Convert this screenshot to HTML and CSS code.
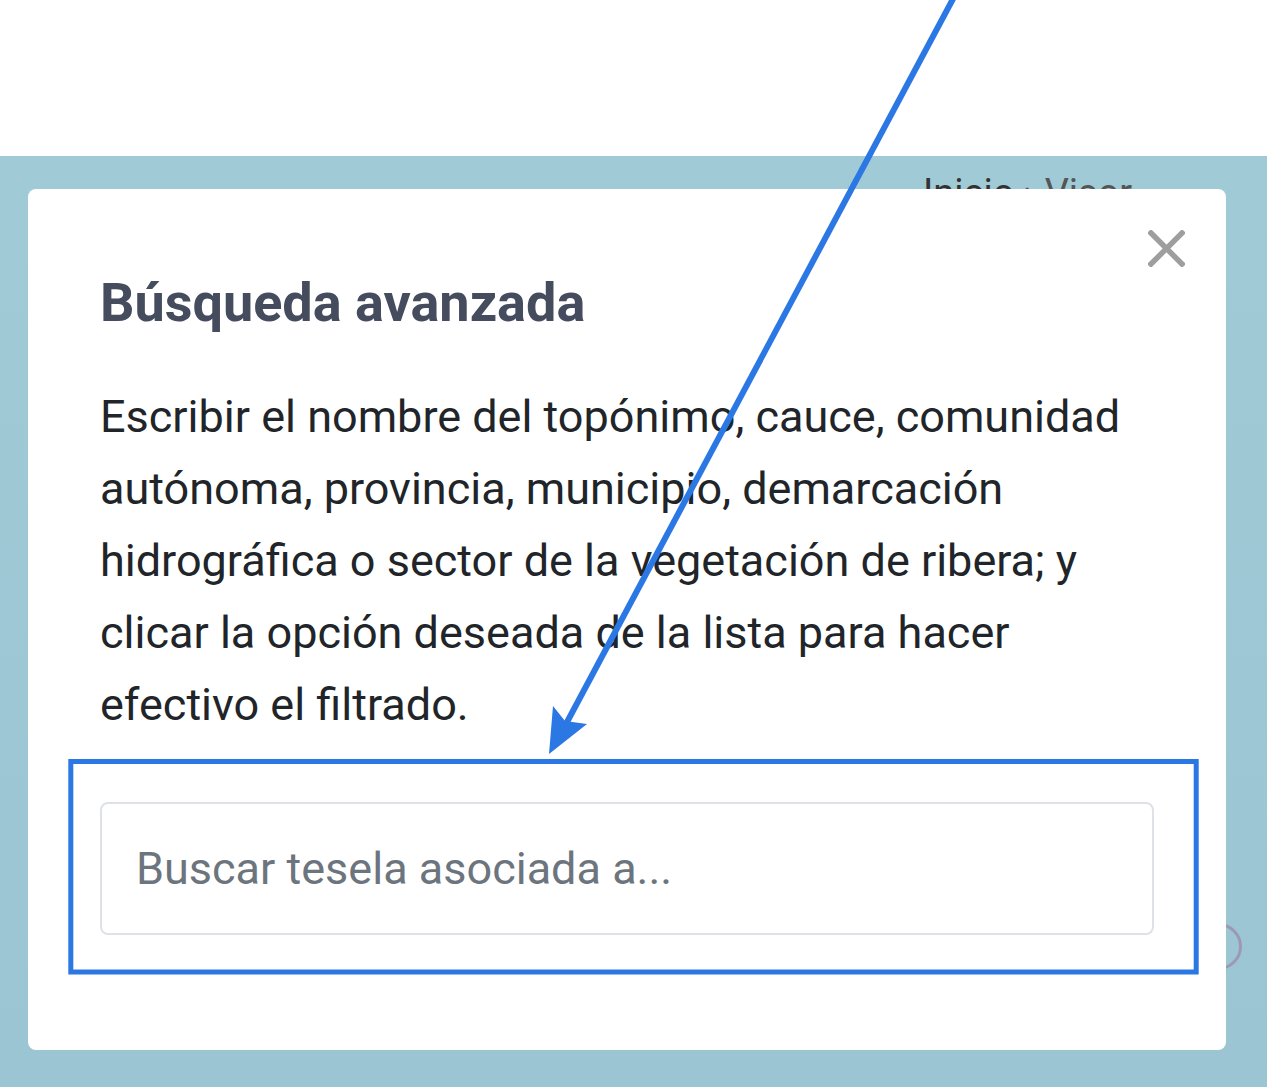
FILE: index.html
```html
<!DOCTYPE html>
<html lang="es">
<head>
  <meta charset="UTF-8" />
  <meta name="viewport" content="width=device-width, initial-scale=1.0"/>
  <title>Búsqueda avanzada</title>
  <link rel="stylesheet" href="styles.css">
</head>
<body>
  <header class="topbar"></header>

  <main class="backdrop">
    <div class="breadcrumb"><span class="crumb-home">Inicio</span> › Visor</div>
    <span class="ring"></span>

    <div class="modal">
      <button class="close-btn" aria-label="Cerrar">
        <svg width="37" height="37" viewBox="0 0 37 37">
          <path d="M3 3 L34 34 M34 3 L3 34" stroke="#9e9e9e" stroke-width="5.5" stroke-linecap="square" fill="none"/>
        </svg>
      </button>
      <h2 class="modal-title">Búsqueda avanzada</h2>
      <p class="modal-text">Escribir el nombre del topónimo, cauce, comunidad autónoma, provincia, municipio, demarcación hidrográfica o sector de la vegetación de ribera; y clicar la opción deseada de la lista para hacer efectivo el filtrado.</p>
      <input class="search-input" type="text" placeholder="Buscar tesela asociada a...">
    </div>
  </main>

  <svg class="annotation" width="1267" height="1087" viewBox="0 0 1267 1087">
    <line x1="954" y1="-3" x2="566" y2="724" stroke="#2b78e4" stroke-width="6"/>
    <polygon points="549,754 553,706 565,721 587,724" fill="#2b78e4"/>
    <rect x="70.8" y="761.5" width="1125.4" height="210.5" fill="none" stroke="#2b78e4" stroke-width="5"/>
  </svg>
</body>
</html>
```

FILE: styles.css
```css
body {
  font-family: Roboto, "Liberation Sans", sans-serif;
  background: #fff;
  margin: 0;
  padding: 0;
  position: relative;
  width: 1267px;
  height: 1087px;
  overflow: hidden;
}

.topbar {
  height: 156px;
  background: #fff;
}

.backdrop {
  position: relative;
  height: 931px;
  background: linear-gradient(180deg, #9fcad6 0%, #9bc5d2 100%);
  padding: 33px 41px 0 28px;
  box-sizing: border-box;
}

.breadcrumb {
  position: absolute;
  top: 18px;
  left: 923px;
  font-size: 38px;
  line-height: 38px;
  color: #555;
  white-space: nowrap;
}

.crumb-home {
  color: #333;
}

.ring {
  position: absolute;
  left: 1195px;
  top: 767px;
  width: 41px;
  height: 41px;
  border: 3px solid #9c98b6;
  border-radius: 50%;
}

.modal {
  position: relative;
  background: #fff;
  border-radius: 8px;
  padding: 81px 72px 115px 72px;
}

.close-btn {
  position: absolute;
  top: 41px;
  right: 41px;
  background: none;
  border: none;
  padding: 0;
  width: 37px;
  height: 37px;
  cursor: pointer;
}

.close-btn svg {
  display: block;
}

.modal-title {
  margin: 0;
  font-size: 54px;
  line-height: 65px;
  font-weight: 700;
  color: #454c5e;
}

.modal-text {
  margin: 46px 0 61px 0;
  font-size: 45px;
  line-height: 72px;
  color: #212529;
}

.search-input {
  display: block;
  width: 100%;
  height: 133px;
  box-sizing: border-box;
  border: 2px solid #dee2e6;
  border-radius: 8px;
  padding: 0 34px;
  font-family: Roboto, "Liberation Sans", sans-serif;
  font-size: 45px;
  color: #212529;
  outline: none;
}

.search-input::placeholder {
  color: #6c757d;
}

.annotation {
  position: absolute;
  top: 0;
  left: 0;
  pointer-events: none;
}
```
